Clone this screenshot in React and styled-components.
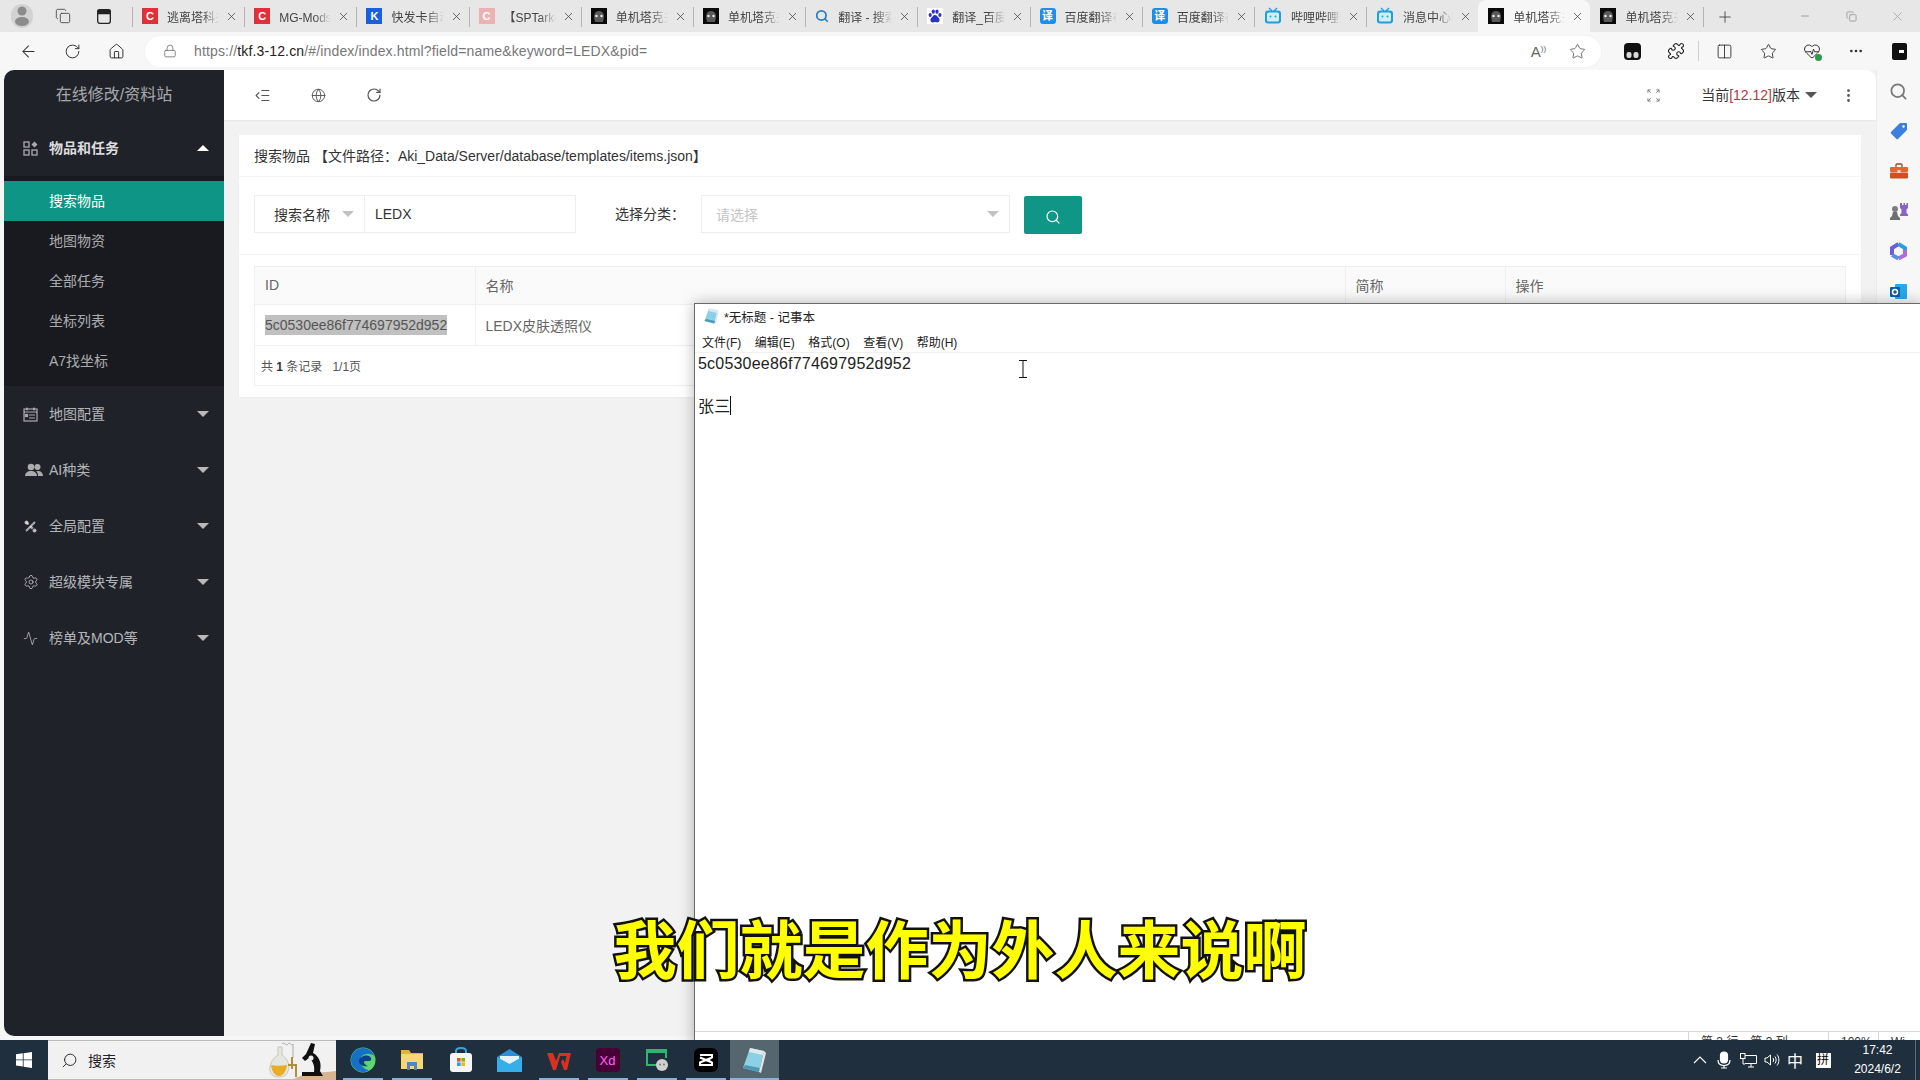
import styled, { createGlobalStyle } from 'styled-components';
import {
  Activity, ArrowLeft, Columns2, Copy, Ellipsis, EllipsisVertical, Globe, HeartPulse, Home,
  IndentDecrease, Lock, Minus, Plus, Puzzle, RotateCw, Search, Settings, Star, X,
} from 'lucide-react';

const GlobalStyle = createGlobalStyle`
  html, body {
    margin: 0;
    padding: 0;
    background: #f6f6f6;
  }

  * {
    box-sizing: border-box;
  }

  body {
    font-family: "Liberation Sans", "Noto Sans CJK SC", sans-serif;
    font-size: 14px;
    color: #333;
  }
`;

const Screen = styled.div`
  position: relative;
  display: flex;
  flex-direction: column;
  width: 1920px;
  height: 1080px;
  overflow: hidden;
`;

/* browser chrome */

const TabStrip = styled.div`
  display: flex;
  align-items: stretch;
  height: 32px;
  background: #e7e7e7;
`;

const StripTools = styled.div`
  display: flex;
  align-items: center;
  width: 132px;
  padding-left: 11px;
`;

const Avatar = styled.div`
  display: flex;
  align-items: center;
  justify-content: center;
  width: 22px;
  height: 24px;
  border-radius: 11px;
  background: #d2d2d2;
  color: #8c8c8c;
`;

const StripButton = styled.div`
  display: flex;
  align-items: center;
  justify-content: center;
  width: 41px;
  color: #444;
  margin-left: ${(p) => p.$ml || 0}px;
`;

const Tab = styled.div`
  position: relative;
  display: flex;
  align-items: center;
  width: 112.2px;
  padding: 0 6px 0 10px;
  border-radius: 8px 8px 0 0;
  background: ${(p) => (p.$active ? '#f7f7f7' : 'transparent')};

  &::before {
    content: '';
    display: ${(p) => (p.$sep ? 'block' : 'none')};
    position: absolute;
    left: 0;
    top: 7px;
    bottom: 5px;
    width: 1px;
    background: #b4b4b4;
  }
`;

const TabTitle = styled.span`
  flex: 1;
  min-width: 0;
  margin: 0 6px 0 9px;
  overflow: hidden;
  white-space: nowrap;
  font-size: 12px;
  color: #444;
  mask-image: linear-gradient(to right, #000 68%, transparent 100%);
`;

const TabClose = styled(X)`
  flex: none;
  width: 13px;
  height: 13px;
  color: #444;
`;

const NewTab = styled.div`
  display: flex;
  align-items: center;
  justify-content: center;
  width: 44px;
  border-left: 1px solid #b4b4b4;
  margin: 7px 0 5px;
  color: #444;
`;

const WindowControls = styled.div`
  display: flex;
  align-items: center;
  margin-left: auto;
  color: #a0a0a0;
`;

const WindowButton = styled.div`
  display: flex;
  align-items: center;
  justify-content: center;
  width: 46px;
`;

const FavBox = styled.div`
  flex: none;
  display: flex;
  align-items: center;
  justify-content: center;
  width: 16px;
  height: 16px;
  border-radius: ${(p) => p.$radius || 0}px;
  background: ${(p) => p.$bg};
  color: #fff;
  font-size: 11px;
  font-weight: 700;
  line-height: 1;
`;

const AddressRow = styled.div`
  display: flex;
  align-items: center;
  height: 38px;
  padding-left: 6px;
  background: #f7f7f7;
`;

const NavSlot = styled.div`
  position: relative;
  flex: none;
  display: flex;
  align-items: center;
  justify-content: center;
  width: ${(p) => p.$w || 44}px;
  height: 30px;
  color: ${(p) => p.$color || '#333'};
`;

const HealthBadge = styled.span`
  position: absolute;
  left: 25px;
  top: 18px;
  width: 7px;
  height: 7px;
  border-radius: 50%;
  background: #2a9d4a;
`;

const UrlPill = styled.div`
  flex: 1;
  display: flex;
  align-items: center;
  height: 31px;
  margin: 0 9px 0 7px;
  padding: 0 4px 0 18px;
  border-radius: 15px;
  background: #fff;
  box-shadow: 0 0 2px rgba(0, 0, 0, 0.06);
`;

const UrlText = styled.span`
  flex: 1;
  margin-left: 17px;
  font-size: 14px;
  letter-spacing: 0.15px;
  color: #777;

  b {
    font-weight: 400;
    color: #222;
  }
`;

const RowDivider = styled.div`
  flex: none;
  width: 1px;
  height: 20px;
  margin-right: 3px;
  background: #cfcfcf;
`;

const ReadAloud = styled.span`
  width: 39px;
  text-align: center;
  font-size: 15px;
  color: #666;

  sup {
    font-size: 8px;
  }
`;

/* admin page in the browser */

const BrowserBody = styled.div`
  flex: 1;
  display: flex;
  min-height: 0;
  padding-left: 4px;
  background: #f6f6f6;
`;

const Sidebar = styled.aside`
  flex: none;
  width: 220px;
  height: 966px;
  border-radius: 10px 0 0 10px;
  background: #20222a;
`;

const SideTitle = styled.div`
  height: 50px;
  line-height: 50px;
  text-align: center;
  font-size: 16px;
  color: rgba(255, 255, 255, 0.62);
`;

const NavItem = styled.div`
  display: flex;
  align-items: center;
  gap: 10px;
  height: 56px;
  padding-left: 18px;
  color: rgba(255, 255, 255, ${(p) => (p.$open ? 0.85 : 0.68)});
`;

const NavIcon = styled.span`
  display: flex;
  align-items: center;
  justify-content: center;
  width: 17px;
  padding-left: ${(p) => p.$shift || 0}px;
  color: rgba(255, 255, 255, 0.62);

  svg {
    flex: none;
  }
`;

const NavLabel = styled.span`
  margin-top: -2px;
  font-size: 14px;
  font-weight: ${(p) => (p.$open ? 700 : 400)};
`;

const Caret = styled.span`
  width: 0;
  height: 0;
  border-left: ${(p) => p.$size || 6}px solid transparent;
  border-right: ${(p) => p.$size || 6}px solid transparent;
  ${(p) => (p.$up ? 'border-bottom' : 'border-top')}: ${(p) => p.$h || 6}px solid ${(p) => p.$color};
`;

const NavCaret = styled.span`
  display: flex;
  margin-left: auto;
  margin-right: 15px;
`;

const SubMenu = styled.div`
  padding: 5px 0;
  background: #191a1f;
`;

const SubItem = styled.div`
  height: 40px;
  line-height: 40px;
  padding-left: 45px;
  font-size: 14px;
  color: ${(p) => (p.$active ? '#fff' : 'rgba(255, 255, 255, 0.65)')};
  background: ${(p) => (p.$active ? '#0e9585' : 'transparent')};
`;

const Main = styled.main`
  flex: none;
  width: 1652px;
  height: 966px;
  background: #f2f2f2;
`;

const TopBar = styled.header`
  display: flex;
  align-items: center;
  justify-content: space-between;
  height: 50px;
  padding: 0 16px 0 10px;
  border-radius: 0 10px 0 0;
  background: #fff;
  box-shadow: 0 1px 2px rgba(0, 0, 0, 0.05);
`;

const BarGroup = styled.div`
  display: flex;
  align-items: center;
`;

const BarButton = styled.span`
  display: flex;
  align-items: center;
  justify-content: center;
  width: ${(p) => p.$w || 56}px;
  margin-left: ${(p) => p.$ml || 0}px;
  margin-right: ${(p) => p.$mr || 0}px;
  color: #555;
`;

const VersionText = styled.span`
  margin: -2px 5px 0 0;
  font-size: 14px;
  color: #333;

  em {
    font-style: normal;
    color: #b5383c;
  }
`;

const CardArea = styled.div`
  padding: 15px;
`;

const Card = styled.section`
  height: 262px;
  background: #fff;
  box-shadow: 0 1px 2px rgba(0, 0, 0, 0.03);
`;

const CardHeader = styled.div`
  height: 42px;
  line-height: 42px;
  padding: 0 15px;
  border-bottom: 1px solid #f4f4f4;
  font-size: 14px;
  color: #333;
`;

const FilterRow = styled.div`
  display: flex;
  align-items: flex-start;
  height: 78px;
  padding: 18px 15px 0;
  border-bottom: 1px solid #f4f4f4;
`;

const FilterBox = styled.div`
  display: flex;
  align-items: center;
  width: ${(p) => p.$w}px;
  height: 38px;
  margin-left: ${(p) => p.$ml || 0}px;
  padding: 0 ${(p) => p.$pr || 10}px 0 ${(p) => p.$pl || 10}px;
  border: 1px solid #eeeeee;
  ${(p) => p.$joined && 'border-left: 0;'}
  font-size: 14px;
  color: ${(p) => p.$color || '#333'};
`;

const BoxCaret = styled.span`
  display: flex;
  margin-left: auto;
`;

const FilterLabel = styled.span`
  margin-left: 39px;
  line-height: 38px;
  font-size: 14px;
  color: #333;
`;

const SearchButton = styled.button`
  display: flex;
  align-items: center;
  justify-content: center;
  width: 58px;
  height: 38px;
  margin: 1px 0 0 14px;
  padding: 3px 0 0;
  border: 0;
  border-radius: 2px;
  background: #109686;
  color: #fff;
`;

const TableWrap = styled.div`
  margin: 11px 15px 0;
  border: 1px solid #efefef;
`;

const Table = styled.table`
  width: 100%;
  table-layout: fixed;
  border-collapse: collapse;
  font-size: 14px;
  color: #666;

  th {
    height: 37px;
    padding: 0 10px;
    background: #fafafa;
    font-weight: 400;
    text-align: left;
    border-left: 1px solid #efefef;
  }

  td {
    height: 41px;
    padding: 0 10px;
    border-top: 1px solid #efefef;
    border-left: 1px solid #efefef;
  }

  th:first-child, td:first-child {
    border-left: 0;
  }
`;

const SelectedText = styled.span`
  display: inline-block;
  line-height: 20px;
  background: #c0c0c0;
  color: #555;
`;

const TableFooter = styled.div`
  height: 40px;
  line-height: 42px;
  padding-left: 6px;
  border-top: 1px solid #efefef;
  font-size: 12px;
  color: #555;

  b {
    color: #333;
  }

  span {
    margin-left: 10px;
  }
`;

const SideRail = styled.div`
  flex: none;
  display: flex;
  flex-direction: column;
  width: 44px;
  padding-top: 1px;
  border-left: 1px solid #ececec;
  background: #f7f7f7;
`;

const RailSlot = styled.div`
  display: flex;
  align-items: center;
  justify-content: center;
  height: 40px;
  color: #777;
`;

/* notepad window, a window on the desktop */

const NotepadWindow = styled.div`
  position: absolute;
  z-index: 2;
  left: 694px;
  top: 303px;
  right: -2px;
  bottom: 0;
  display: flex;
  flex-direction: column;
  border: 1px solid #6a6a6a;
  background: #fff;
  box-shadow: 0 0 14px rgba(0, 0, 0, 0.28);
`;

const NotepadTitle = styled.div`
  display: flex;
  align-items: center;
  gap: 4px;
  height: 29px;
  padding: 0 0 5px 9px;
  font-size: 12.5px;
  color: #222;
`;

const NotepadMenu = styled.div`
  display: flex;
  gap: 13.5px;
  height: 20px;
  padding-left: 7px;
  line-height: 20px;
  font-size: 12px;
  color: #222;
  border-bottom: 1px solid #f0f0f0;
`;

const NotepadText = styled.div`
  flex: 1;
  padding: 0 0 0 3px;
  font-size: 16px;
  letter-spacing: 0.2px;
  line-height: 21.5px;
  color: #222;
  white-space: pre;
`;

const TextCaret = styled.span`
  display: inline-block;
  width: 1px;
  height: 19px;
  vertical-align: -3px;
  background: #111;
`;

const NotepadStatus = styled.div`
  display: flex;
  height: 40px;
  margin-bottom: 8px;
  border-top: 1px solid #d8d8d8;
  padding-left: 993px;
  font-size: 12px;
  line-height: 20px;
  color: #333;
`;

const StatusCell = styled.div`
  width: ${(p) => p.$w}px;
  padding-left: 12px;
  border-left: 1px solid #d8d8d8;
  white-space: nowrap;
`;

const IBeam = styled.svg`
  position: absolute;
  z-index: 3;
  left: 1018px;
  top: 360px;
`;

const Subtitle = styled.div`
  position: absolute;
  z-index: 5;
  left: 0;
  right: 0;
  top: 903px;
  text-align: center;
  font-family: "Noto Sans CJK SC", sans-serif;
  font-size: 63px;
  font-weight: 700;
  line-height: 86px;
  color: #ffff00;
  -webkit-text-stroke: 5px #111;
  paint-order: stroke fill;
`;

/* windows taskbar */

const Taskbar = styled.footer`
  position: relative;
  z-index: 4;
  flex: none;
  display: flex;
  height: 40px;
  background: #1f2f3d;
  color: #fff;
`;

const StartButton = styled.div`
  display: flex;
  align-items: center;
  justify-content: center;
  width: 48px;
`;

const SearchBox = styled.div`
  display: flex;
  align-items: center;
  overflow: hidden;
  width: 288px;
  padding-left: 13px;
  background: #f1f1f1;
  border-top: 1px solid #bbb;
  border-bottom: 1px solid #bbb;
  color: #222;
  font-size: 14px;
`;

const SearchGlass = styled(Search)`
  transform: scaleX(-1);
`;

const SearchWord = styled.span`
  margin-left: 10px;
`;

const SearchArt = styled.svg`
  margin-left: auto;
`;

const Running = styled.div`
  display: flex;
  margin-left: 2px;
`;

const TaskButton = styled.div`
  position: relative;
  display: flex;
  align-items: center;
  justify-content: center;
  width: 49px;
  height: 40px;
  background: ${(p) => (p.$active ? '#56666f' : 'transparent')};

  &::after {
    content: '';
    display: ${(p) => (p.$on ? 'block' : 'none')};
    position: absolute;
    bottom: 0;
    left: ${(p) => (p.$active ? 0 : 4.5)}px;
    right: ${(p) => (p.$active ? 0 : 4.5)}px;
    height: 2px;
    background: #85b4d8;
  }
`;

const Tray = styled.div`
  display: flex;
  margin-left: auto;
`;

const TrayItem = styled.div`
  display: flex;
  align-items: center;
  justify-content: center;
  width: ${(p) => p.$w || 24}px;
  color: #fff;
  font-size: 16px;
`;

const ImeBox = styled.span`
  display: flex;
  align-items: center;
  justify-content: center;
  width: 15px;
  height: 15px;
  background: #fff;
  color: #000;
  font-size: 12px;
  line-height: 1;
`;

const Clock = styled.div`
  width: 75px;
  text-align: center;
  font-size: 12px;
  line-height: 19px;
  padding-top: 1px;
`;

const ShowDesktop = styled.div`
  width: 5px;
  border-left: 1px solid #5c6a76;
`;

function DarkFav() {
  return (
    <svg width="16" height="16" viewBox="0 0 16 16">
      <rect width="16" height="16" fill="#0a0a0a" />
      <path d="M3 9c0-4 2-6 5-6s5 2 5 6l-1 5H4z" fill="#5a5a5a" />
      <circle cx="5.5" cy="8" r="1.2" fill="#eee" />
      <circle cx="10.5" cy="8" r="1.2" fill="#eee" />
    </svg>
  );
}

function PawFav() {
  return (
    <svg width="16" height="16" viewBox="0 0 16 16">
      <rect width="16" height="16" fill="#fff" />
      <g fill="#2b32c9">
        <ellipse cx="3.2" cy="7" rx="1.6" ry="2" />
        <ellipse cx="6.3" cy="3.6" rx="1.6" ry="2.2" />
        <ellipse cx="10" cy="3.6" rx="1.6" ry="2.2" />
        <ellipse cx="12.9" cy="7" rx="1.6" ry="2" />
        <path d="M8 7c-2 0-2.4 2-3.8 3C3 11 3 14.5 6 14.5c1 0 1.4-.4 2-.4s1 .4 2 .4c3 0 3-3.5 1.8-4.5C10.400 9 10 7 8 7z" />
      </g>
    </svg>
  );
}

function TvFav() {
  return (
    <svg width="18" height="18" viewBox="0 0 18 18">
      <path d="M5 1l3 3M13 1l-3 3" stroke="#1fa0d8" strokeWidth="1.4" />
      <rect x="1" y="3.500" width="16" height="13" rx="3" fill="#1fa0d8" />
      <rect x="3" y="5.500" width="12" height="9" rx="1.500" fill="#cfeefa" />
      <circle cx="6.500" cy="9.500" r="1" fill="#1fa0d8" />
      <circle cx="11.500" cy="9.500" r="1" fill="#1fa0d8" />
    </svg>
  );
}

const tabs = [
  { title: '逃离塔科夫离线版', fav: <FavBox $bg="#e0313a">C</FavBox> },
  { title: 'MG-Mods论坛', fav: <FavBox $bg="#e0313a">C</FavBox> },
  { title: '快发卡自动发卡', fav: <FavBox $bg="#1a5fe0">K</FavBox> },
  { title: '【SPTarkov】', fav: <FavBox $bg="#eeb1b1">C</FavBox> },
  { title: '单机塔克夫资料', fav: <DarkFav /> },
  { title: '单机塔克夫资料', fav: <DarkFav /> },
  { title: '翻译 - 搜索结果', fav: <Search size={14} color="#2a7fc4" strokeWidth={3} /> },
  { title: '翻译_百度搜索', fav: <PawFav /> },
  { title: '百度翻译在线', fav: <FavBox $bg="#1c8ee8" $radius={3}>译</FavBox> },
  { title: '百度翻译在线', fav: <FavBox $bg="#1c8ee8" $radius={3}>译</FavBox> },
  { title: '哔哩哔哩弹幕', fav: <TvFav /> },
  { title: '消息中心哔哩', fav: <TvFav /> },
  { title: '单机塔克夫资料', fav: <DarkFav />, active: true },
  { title: '单机塔克夫资料', fav: <DarkFav />, nosep: true },
];

function ItemsIcon() {
  return (
    <svg width="15" height="15" viewBox="0 0 15 15" fill="none" stroke="currentColor" strokeWidth="1.3">
      <rect x="1" y="1" width="5" height="5" />
      <rect x="1" y="9" width="5" height="5" />
      <rect x="9" y="9" width="5" height="5" />
      <path d="M11.500 .5l3 3-3 3-3-3z" fill="currentColor" stroke="none" />
    </svg>
  );
}

function MapIcon() {
  return (
    <svg width="15" height="15" viewBox="0 0 15 15" fill="none" stroke="currentColor" strokeWidth="1.2">
      <rect x="1" y="2" width="13" height="12" />
      <path d="M4 .5v3M11 .5v3M1 5h13M6 8h6M6 11h6" />
      <rect x="2.500" y="7.500" width="2" height="2" />
    </svg>
  );
}

function UsersIcon() {
  return (
    <svg width="18" height="14" viewBox="0 0 18 14" fill="currentColor">
      <circle cx="6" cy="4" r="3.300" />
      <path d="M0 13c0-3 2.500-5 6-5s6 2 6 5z" />
      <circle cx="12.500" cy="4" r="3" />
      <path d="M13 13h5c0-3-1.800-5-5-5-.7 0-1.300.1-1.800.3C12.600 9.500 13 11 13 13z" />
    </svg>
  );
}

function ToolsIcon() {
  return (
    <svg width="13" height="13" viewBox="0 0 13 13" fill="none" stroke="currentColor">
      <path d="M2 11L11 2" strokeWidth="2" />
      <path d="M2 2l9 9" strokeWidth="2.400" strokeDasharray="3.500 2.500" />
      <circle cx="2.500" cy="2.500" r="2" fill="currentColor" stroke="none" />
      <circle cx="10.500" cy="10.500" r="2" fill="currentColor" stroke="none" />
    </svg>
  );
}

function ExpandIcon() {
  return (
    <svg width="13" height="13" viewBox="0 0 14 14" fill="none" stroke="#777" strokeWidth="1">
      <path d="M1 4V1h3M1 1l3 3M13 4V1h-3M13 1l-3 3M1 10v3h3M1 13l3-3M13 10v3h-3M13 13l-3-3" />
    </svg>
  );
}

function TagIcon() {
  return (
    <svg width="18" height="18" viewBox="0 0 18 18">
      <path d="M1 10l8-8c.5-.5 1-1 2-1h5c.6 0 1 .4 1 1v5c0 1-.4 1.500-1 2l-8 8c-.5.5-1 .5-1.500 0L1 11.500c-.5-.5-.5-1 0-1.500z" fill="#3d7fdc" />
      <circle cx="13.500" cy="4.500" r="1.200" fill="#fff" />
    </svg>
  );
}

function ToolboxIcon() {
  return (
    <svg width="18" height="16" viewBox="0 0 18 16">
      <path d="M6 4V2c0-.6.4-1 1-1h4c.6 0 1 .4 1 1v2" fill="none" stroke="#8a4a32" strokeWidth="1.300" />
      <rect y="4" width="18" height="5" rx="1" fill="#e8642c" />
      <rect y="9.500" width="18" height="6" rx="1" fill="#d34f1f" />
      <rect x="7.500" y="7" width="3" height="3" fill="#fbd9c8" />
    </svg>
  );
}

function ChessIcon() {
  return (
    <svg width="19" height="18" viewBox="0 0 19 18">
      <path d="M11 1h2v2h1.500V1h1.500v2h1.500V1H19v5l-1.500 1.500V11l1.500 1.500V14h-8v-1.500l1.500-1.500V7.500L11 6z" fill="#8a63c4" />
      <circle cx="6" cy="7" r="3" fill="#7d7d7d" />
      <path d="M4 10h4l1 4 2 2v2H1v-2l2-2z" fill="#6f6f6f" />
    </svg>
  );
}

function M365Icon() {
  return (
    <svg width="17" height="18" viewBox="0 0 17 18" fill="none" strokeWidth="4">
      <path d="M2 13V6l6.500-4" stroke="#6a5fd6" />
      <path d="M8.500 2L15 6v2" stroke="#2f9be6" />
      <path d="M15 8v5l-6.500 3.500" stroke="#b16cd8" />
      <path d="M8.500 16.500L2 13" stroke="#5b8fe0" />
    </svg>
  );
}

function OutlookIcon() {
  return (
    <svg width="17" height="17" viewBox="0 0 17 17">
      <rect x="5" y="1" width="12" height="15" rx="1" fill="#28a8ea" />
      <rect y="4" width="10" height="10" rx="1" fill="#0a5fae" />
      <circle cx="5" cy="9" r="2.500" fill="none" stroke="#fff" strokeWidth="1.500" />
    </svg>
  );
}

function WindowsLogo() {
  return (
    <svg width="16" height="16" viewBox="0 0 16 16" fill="#fff">
      <path d="M0 2.300l6.800-1v6.200H0zM7.600 1.200L16 0v7.500H7.600zM0 8.300h6.800v6.300L0 13.600zM7.600 8.300H16V16l-8.400-1.200z" />
    </svg>
  );
}

function SearchScene() {
  return (
    <SearchArt width="72" height="38" viewBox="0 0 72 38">
      <path d="M30 38c10-6 24-6 42-8v8z" fill="#d8b58f" />
      <path d="M14 6h4v8c6 4 8 10 6 16-1 4-4 6-9 6s-8-2-9-6c-1-6 2-12 8-16z" fill="#e6e6e0" stroke="#c6c6bc" />
      <path d="M7 24c4 1 10 1 16 0-1 7-4 11-8 11s-7-4-8-11z" fill="#e8ad24" />
      <path d="M18 3c2-3 4 3 6 0s4 3 5 0v14" fill="none" stroke="#aaa" />
      <path d="M24 24h8v12M28 16v12" fill="none" stroke="#b08c3c" strokeWidth="2" />
      <path d="M47 2l4 1-2 9c6 3 9 10 7 18l3 5H38v-4h12c1-6-1-11-5-14l-4 3-3-3 4-4z" fill="#111" />
      <circle cx="47" cy="17" r="2.500" fill="#eee" />
    </SearchArt>
  );
}

function EdgeIcon() {
  return (
    <svg width="26" height="26" viewBox="0 0 26 26">
      <defs>
        <linearGradient id="edge-a" x1="0" y1="0" x2="1" y2="1">
          <stop offset="0" stopColor="#2fc2a0" />
          <stop offset="1" stopColor="#6fdc5c" />
        </linearGradient>
      </defs>
      <circle cx="13" cy="13" r="12.500" fill="url(#edge-a)" />
      <path d="M1 13C1 5 8 1 13 1c6 0 10 4 11 8-3-3-9-3-12 0-3 3-2 9 2 12 1 1 3 2 5 2-2 1.500-4 2-6 2C6 25 1 19 1 13z" fill="#1670c4" />
      <path d="M12 10c3-2 7-2 9 1 .8 1.300 0 3-2 3h-4c-2 0-1 4 3 5-4 1-9-1-9-5 0-2 1-3 3-4z" fill="#0d3f8a" />
    </svg>
  );
}

function FolderIcon() {
  return (
    <svg width="24" height="22" viewBox="0 0 24 22">
      <path d="M1 1h8l2 3h12v16H1z" fill="#e3b23c" />
      <rect x="1" y="5" width="22" height="15" fill="#f7d774" />
      <path d="M7 13h10v8h-3v-4h-4v4H7z" fill="#4d89c4" />
    </svg>
  );
}

function StoreIcon() {
  return (
    <svg width="24" height="26" viewBox="0 0 24 26">
      <path d="M7 7V4c0-2 2-3 5-3s5 1 5 3v3" fill="none" stroke="#3ba3dc" strokeWidth="2" />
      <rect x="1" y="6" width="22" height="19" rx="3" fill="#f5f5f5" />
      <rect x="8" y="11" width="3.600" height="3.600" fill="#e8542e" />
      <rect x="12.400" y="11" width="3.600" height="3.600" fill="#7fb800" />
      <rect x="8" y="15.400" width="3.600" height="3.600" fill="#1ea4e8" />
      <rect x="12.400" y="15.400" width="3.600" height="3.600" fill="#f5b700" />
    </svg>
  );
}

function MailIcon() {
  return (
    <svg width="25" height="23" viewBox="0 0 25 23">
      <path d="M0 8L12.500 0 25 8v15H0z" fill="#2b8fd8" />
      <path d="M3 7h19v7l-9.500 5L3 14z" fill="#e8f4fc" />
      <path d="M0 8l12.500 7L25 8v15H0z" fill="#35aeea" />
    </svg>
  );
}

function WpsIcon() {
  return (
    <svg width="24" height="20" viewBox="0 0 24 20">
      <path d="M0 3h6l3 8 3-8h2l-5 17H6zM14 3h10l-4 17h-3l-3-8 2-3 2 4 1.500-7H13z" fill="#d9301f" />
    </svg>
  );
}

const XdBox = styled.div`
  display: flex;
  align-items: center;
  justify-content: center;
  width: 24px;
  height: 24px;
  border-radius: 4px;
  background: #470137;
  color: #ff61f6;
  font-size: 13px;
`;

function ChatIcon() {
  return (
    <svg width="24" height="24" viewBox="0 0 24 24" fill="none">
      <path d="M14 17H2V2h19v8" stroke="#2bb673" strokeWidth="2" />
      <path d="M2 2h19v3H2z" fill="#2bb673" />
      <circle cx="17" cy="17" r="6" fill="#cfcfcf" />
      <circle cx="15" cy="16.500" r="1" fill="#777" />
      <circle cx="19" cy="16.500" r="1" fill="#777" />
    </svg>
  );
}

function CapcutIcon() {
  return (
    <svg width="24" height="24" viewBox="0 0 24 24">
      <rect width="24" height="24" rx="6" fill="#000" />
      <path d="M6 7h12v2.500l-4 2.500 4 2.500V17H6v-2.500l12-5M6 9.500l12 5" fill="none" stroke="#fff" strokeWidth="2" />
    </svg>
  );
}

function NotepadIcon({ size = 26 }) {
  return (
    <svg width={size} height={size} viewBox="0 0 26 26">
      <path d="M8 1l14 3-5 21-16-4z" fill="#8bd0e4" />
      <path d="M8 1l14 3-1 4-14-3z" fill="#dfe9ec" />
      <path d="M1 21l16 4 1-4L3 18z" fill="#4b9ab5" />
      <path d="M22 4l2 2-5 20-2-1z" fill="#e6e6e6" />
    </svg>
  );
}

function MicIcon() {
  return (
    <svg width="14" height="18" viewBox="0 0 14 18" fill="none" stroke="#fff" strokeWidth="1.200">
      <rect x="3.500" y="1" width="7" height="11" rx="3.500" fill="#fff" />
      <path d="M1 9c0 3.500 2.500 5.500 6 5.500s6-2 6-5.500M7 14.500V17M4 17h6" />
    </svg>
  );
}

function NetworkIcon() {
  return (
    <svg width="17" height="15" viewBox="0 0 17 15" fill="none" stroke="#fff">
      <path d="M5 2.500h11.500v8H5M8 14h6M11 10.500V14" />
      <rect x=".5" y=".5" width="4.500" height="5" fill="#1f2f3d" />
      <path d="M3 5.500V11H5" />
    </svg>
  );
}

function SpeakerIcon() {
  return (
    <svg width="16" height="14" viewBox="0 0 16 14" fill="none" stroke="#fff">
      <path d="M1 5v4h2l3.500 3V2L3 5z" />
      <path d="M9 5c.8 1.200.8 2.800 0 4M11 3.500c1.500 2 1.500 5 0 7M13 1.500c2.500 3 2.500 8 0 11" />
    </svg>
  );
}

function App() {
  return (
    <Screen>
      <GlobalStyle />

      <TabStrip>
        <StripTools>
          <Avatar>
            <svg width="14" height="20" viewBox="0 0 14 20" fill="currentColor">
              <circle cx="7" cy="5" r="4.500" />
              <ellipse cx="7" cy="15.500" rx="7" ry="4.500" />
            </svg>
          </Avatar>
          <StripButton $ml={9}><Copy size={16} strokeWidth={1.3} /></StripButton>
          <StripButton>
            <svg width="14" height="15" viewBox="0 0 14 15" fill="none" stroke="#222" strokeWidth="1.300">
              <rect x=".7" y=".7" width="12.600" height="13.600" rx="2" />
              <path d="M1 1.500h12v3H1z" fill="#222" />
            </svg>
          </StripButton>
        </StripTools>
        {tabs.map((tab, i) => (
          <Tab key={i} $active={tab.active} $sep={!tab.active && !tab.nosep}>
            {tab.fav}
            <TabTitle>{tab.title}</TabTitle>
            <TabClose strokeWidth={1.4} />
          </Tab>
        ))}
        <NewTab><Plus size={18} strokeWidth={1.2} /></NewTab>
        <WindowControls>
          <WindowButton><Minus size={12} /></WindowButton>
          <WindowButton><Copy size={11} /></WindowButton>
          <WindowButton><X size={15} strokeWidth={1.2} /></WindowButton>
        </WindowControls>
      </TabStrip>

      <AddressRow>
        <NavSlot><ArrowLeft size={19} strokeWidth={1.3} /></NavSlot>
        <NavSlot><RotateCw size={17} strokeWidth={1.4} /></NavSlot>
        <NavSlot><Home size={17} strokeWidth={1.4} /></NavSlot>
        <UrlPill>
          <Lock size={14} strokeWidth={1.3} color="#666" />
          <UrlText>https://<b>tkf.3-12.cn</b>/#/index/index.html?field=name&amp;keyword=LEDX&amp;pid=</UrlText>
          <ReadAloud>A<sup>))</sup></ReadAloud>
          <NavSlot $w={39} $color="#666"><Star size={17} strokeWidth={1.3} /></NavSlot>
        </UrlPill>
        <NavSlot>
          <svg width="17" height="17" viewBox="0 0 17 17">
            <rect width="17" height="17" rx="4" fill="#111" />
            <rect x="2.500" y="9" width="5" height="6" rx="2" fill="#d8d8d8" />
            <rect x="9.500" y="9" width="5" height="6" rx="2" fill="#d8d8d8" />
          </svg>
        </NavSlot>
        <NavSlot><Puzzle size={18} strokeWidth={1.5} color="#222" /></NavSlot>
        <RowDivider />
        <NavSlot><Columns2 size={17} strokeWidth={1.3} /></NavSlot>
        <NavSlot><Star size={17} strokeWidth={1.3} /></NavSlot>
        <NavSlot>
          <HeartPulse size={18} strokeWidth={1.3} />
          <HealthBadge />
        </NavSlot>
        <NavSlot><Ellipsis size={16} strokeWidth={2} /></NavSlot>
        <NavSlot $w={42}>
          <svg width="15" height="17" viewBox="0 0 15 17">
            <rect width="15" height="17" rx="2" fill="#111" />
            <rect x="7" y="7" width="5" height="3" fill="#fff" />
          </svg>
        </NavSlot>
      </AddressRow>

      <BrowserBody>
        <Sidebar>
          <SideTitle>在线修改/资料站</SideTitle>
          <NavItem $open>
            <NavIcon><ItemsIcon /></NavIcon>
            <NavLabel $open>物品和任务</NavLabel>
            <NavCaret><Caret $up $color="#fff" /></NavCaret>
          </NavItem>
          <SubMenu>
            <SubItem $active>搜索物品</SubItem>
            <SubItem>地图物资</SubItem>
            <SubItem>全部任务</SubItem>
            <SubItem>坐标列表</SubItem>
            <SubItem>A7找坐标</SubItem>
          </SubMenu>
          <NavItem>
            <NavIcon><MapIcon /></NavIcon>
            <NavLabel>地图配置</NavLabel>
            <NavCaret><Caret $color="#b9b9bc" /></NavCaret>
          </NavItem>
          <NavItem>
            <NavIcon $shift={6}><UsersIcon /></NavIcon>
            <NavLabel>AI种类</NavLabel>
            <NavCaret><Caret $color="#b9b9bc" /></NavCaret>
          </NavItem>
          <NavItem>
            <NavIcon><ToolsIcon /></NavIcon>
            <NavLabel>全局配置</NavLabel>
            <NavCaret><Caret $color="#b9b9bc" /></NavCaret>
          </NavItem>
          <NavItem>
            <NavIcon><Settings size={16} strokeWidth={1.4} /></NavIcon>
            <NavLabel>超级模块专属</NavLabel>
            <NavCaret><Caret $color="#b9b9bc" /></NavCaret>
          </NavItem>
          <NavItem>
            <NavIcon><Activity size={15} strokeWidth={1.4} /></NavIcon>
            <NavLabel>榜单及MOD等</NavLabel>
            <NavCaret><Caret $color="#b9b9bc" /></NavCaret>
          </NavItem>
        </Sidebar>

        <Main>
          <TopBar>
            <BarGroup>
              <BarButton><IndentDecrease size={17} strokeWidth={1.5} /></BarButton>
              <BarButton><Globe size={15} strokeWidth={1.5} /></BarButton>
              <BarButton><RotateCw size={16} strokeWidth={1.8} /></BarButton>
            </BarGroup>
            <BarGroup>
              <BarButton $w={30} $mr={33}><ExpandIcon /></BarButton>
              <VersionText>当前<em>[12.12]</em>版本</VersionText>
              <Caret $size={6} $h={6} $color="#555" />
              <BarButton $w={24} $ml={19}><EllipsisVertical size={17} /></BarButton>
            </BarGroup>
          </TopBar>
          <CardArea>
            <Card>
              <CardHeader>搜索物品 【文件路径：Aki_Data/Server/database/templates/items.json】</CardHeader>
              <FilterRow>
                <FilterBox $w={111} $pl={19}>
                  搜索名称
                  <BoxCaret><Caret $color="#c2c2c2" /></BoxCaret>
                </FilterBox>
                <FilterBox $w={211} $joined>LEDX</FilterBox>
                <FilterLabel>选择分类：</FilterLabel>
                <FilterBox $w={309} $ml={16} $pl={14} $color="#c4c4c4">
                  请选择
                  <BoxCaret><Caret $color="#c2c2c2" /></BoxCaret>
                </FilterBox>
                <SearchButton><Search size={16} strokeWidth={1.8} /></SearchButton>
              </FilterRow>
              <TableWrap>
                <Table>
                  <colgroup>
                    <col width="220" />
                    <col width="870" />
                    <col width="160" />
                    <col />
                  </colgroup>
                  <thead>
                    <tr>
                      <th>ID</th>
                      <th>名称</th>
                      <th>简称</th>
                      <th>操作</th>
                    </tr>
                  </thead>
                  <tbody>
                    <tr>
                      <td><SelectedText>5c0530ee86f774697952d952</SelectedText></td>
                      <td>LEDX皮肤透照仪</td>
                      <td />
                      <td />
                    </tr>
                  </tbody>
                </Table>
                <TableFooter>共 <b>1</b> 条记录<span>1/1页</span></TableFooter>
              </TableWrap>
            </Card>
          </CardArea>
        </Main>

        <SideRail>
          <RailSlot><Search size={19} strokeWidth={2.2} /></RailSlot>
          <RailSlot><TagIcon /></RailSlot>
          <RailSlot><ToolboxIcon /></RailSlot>
          <RailSlot><ChessIcon /></RailSlot>
          <RailSlot><M365Icon /></RailSlot>
          <RailSlot><OutlookIcon /></RailSlot>
        </SideRail>
      </BrowserBody>

      <NotepadWindow>
        <NotepadTitle>
          <NotepadIcon size={16} />
          *无标题 - 记事本
        </NotepadTitle>
        <NotepadMenu>
          <span>文件(F)</span>
          <span>编辑(E)</span>
          <span>格式(O)</span>
          <span>查看(V)</span>
          <span>帮助(H)</span>
        </NotepadMenu>
        <NotepadText>
          5c0530ee86f774697952d952{'\n\n'}张三<TextCaret />
        </NotepadText>
        <NotepadStatus>
          <StatusCell $w={140}>第 3 行，第 3 列</StatusCell>
          <StatusCell $w={50}>100%</StatusCell>
          <StatusCell $w={37}>Wi</StatusCell>
        </NotepadStatus>
      </NotepadWindow>

      <IBeam width="10" height="18" viewBox="0 0 10 18" fill="none" stroke="#111">
        <path d="M1 .5h8M5 .5v17M1 17.500h8" />
      </IBeam>

      <Subtitle>我们就是作为外人来说啊</Subtitle>

      <Taskbar>
        <StartButton><WindowsLogo /></StartButton>
        <SearchBox>
          <SearchGlass size={17} strokeWidth={1.3} />
          <SearchWord>搜索</SearchWord>
          <SearchScene />
        </SearchBox>
        <Running>
          <TaskButton $on><EdgeIcon /></TaskButton>
          <TaskButton $on><FolderIcon /></TaskButton>
          <TaskButton><StoreIcon /></TaskButton>
          <TaskButton><MailIcon /></TaskButton>
          <TaskButton $on><WpsIcon /></TaskButton>
          <TaskButton $on><XdBox>Xd</XdBox></TaskButton>
          <TaskButton $on><ChatIcon /></TaskButton>
          <TaskButton $on><CapcutIcon /></TaskButton>
          <TaskButton $on $active><NotepadIcon /></TaskButton>
        </Running>
        <Tray>
          <TrayItem>
            <svg width="14" height="8" viewBox="0 0 14 8" fill="none" stroke="#fff" strokeWidth="1.100">
              <path d="M1 7l6-6 6 6" />
            </svg>
          </TrayItem>
          <TrayItem><MicIcon /></TrayItem>
          <TrayItem><NetworkIcon /></TrayItem>
          <TrayItem><SpeakerIcon /></TrayItem>
          <TrayItem $w={22}>中</TrayItem>
          <TrayItem $w={34}><ImeBox>拼</ImeBox></TrayItem>
          <Clock>17:42<br />2024/6/2</Clock>
          <ShowDesktop />
        </Tray>
      </Taskbar>
    </Screen>
  );
}

export default App;
